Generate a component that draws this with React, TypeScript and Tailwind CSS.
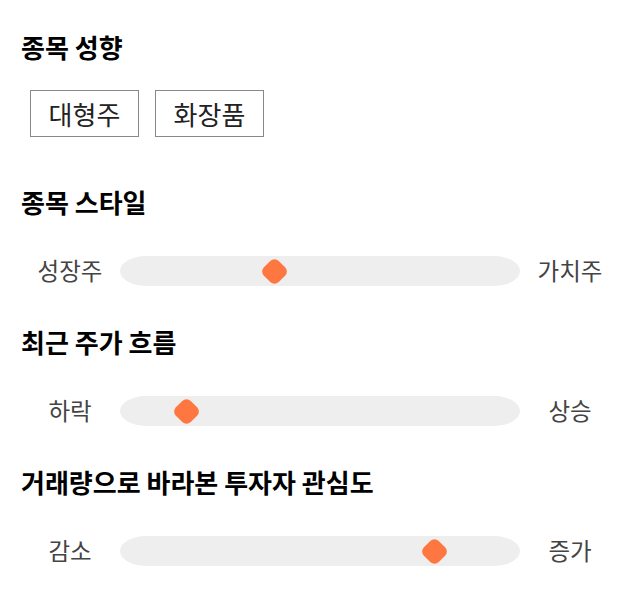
import { useState } from "react";

interface SliderRowProps {
  left: string;
  right: string;
  value: number;
}

function SliderRow({ left, right, value }: SliderRowProps) {
  // value: 0..100, thumb center along the track
  return (
    <div className="flex items-center h-[30px]">
      <div className="w-[100px] text-center text-[23.5px] text-[#444]">{left}</div>
      <div className="relative w-[400px] h-[30px] bg-[#eeeeee] rounded-[26px/15px]">
        <div
          className="absolute top-1/2 w-[21px] h-[21px] -mt-[10.5px] -ml-[10.5px] rotate-45 rounded-[6px] bg-[#ff7740]"
          style={{ left: `${value}%` }}
        />
      </div>
      <div className="w-[100px] text-center text-[23.5px] text-[#444]">{right}</div>
    </div>
  );
}

export default function App() {
  const [picked] = useState<string[]>(["대형주", "화장품"]);

  return (
    <div
      className="w-[640px] bg-white px-5 pt-[31px] pb-10"
      style={{ fontFamily: '"Noto Sans CJK KR", "Noto Sans", sans-serif' }}
    >
      <section>
        <h2 className="pl-px h-8 leading-8 text-[26px] font-bold text-black">종목 성향</h2>
        <div className="flex gap-4 mt-[27px] ml-[10px]">
          {picked.map((tag) => (
            <button
              key={tag}
              className="h-[47px] w-[109px] border border-[#888] text-[26px] leading-none text-[#222] bg-white"
            >
              {tag}
            </button>
          ))}
        </div>
      </section>

      <section className="mt-[49px]">
        <h2 className="pl-px h-8 leading-8 text-[26px] font-bold text-black">종목 스타일</h2>
        <div className="mt-[38px]">
          <SliderRow left="성장주" right="가치주" value={38.5} />
        </div>
      </section>

      <section className="mt-10">
        <h2 className="pl-px h-8 leading-8 text-[26px] font-bold text-black">최근 주가 흐름</h2>
        <div className="mt-[38px]">
          <SliderRow left="하락" right="상승" value={16.5} />
        </div>
      </section>

      <section className="mt-10">
        <h2 className="pl-px h-8 leading-8 text-[26px] font-bold text-black">
          거래량으로 바라본 투자자 관심도
        </h2>
        <div className="mt-[38px]">
          <SliderRow left="감소" right="증가" value={78.5} />
        </div>
      </section>
    </div>
  );
}
